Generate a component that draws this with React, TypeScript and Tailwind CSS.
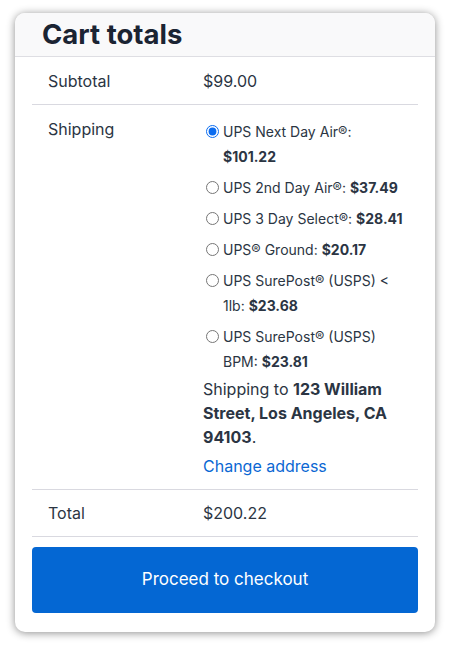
import { useState } from 'react';

const rates = [
  { id: 'next', label: 'UPS Next Day Air®:', price: '$101.22' },
  { id: '2nd', label: 'UPS 2nd Day Air®:', price: '$37.49' },
  { id: '3day', label: 'UPS 3 Day Select®:', price: '$28.41' },
  { id: 'ground', label: 'UPS® Ground:', price: '$20.17' },
  { id: 'sp1', label: 'UPS SurePost® (USPS) < 1lb:', price: '$23.68' },
  { id: 'sp2', label: 'UPS SurePost® (USPS) BPM:', price: '$23.81' },
];

export default function App() {
  const [rate, setRate] = useState('next');

  return (
    <div className="min-h-[645px] bg-white pl-[15px] pt-[13px] font-['Inter',sans-serif] text-[#2b3543]">
      <div className="flex h-[619px] w-[420px] flex-col overflow-hidden rounded-[10px] bg-white shadow-[0_1px_8px_rgba(0,0,0,0.45)]">
        <div className="flex h-[44px] items-end border-b border-[#dedee3] bg-[#f9f9fa] px-[27px]">
          <h2 className="pb-[5px] text-[27.5px] font-bold leading-[34px] text-[#1b2433]">Cart totals</h2>
        </div>

        <div className="flex flex-1 flex-col px-[17px]">
          <div className="grid h-[48px] grid-cols-[155px_1fr] items-center border-b border-[#d9d9e0] text-[16px]">
            <span className="pl-4">Subtotal</span>
            <span className="pl-4">$99.00</span>
          </div>

          <div className="grid grid-cols-[155px_1fr] border-b border-[#d9d9e0] pb-[11px] pt-[12px] text-[16px] leading-[24px]">
            <span className="pl-4">Shipping</span>
            <div className="pl-4">
              <ul className="mt-[2px] flex flex-col gap-[6px]">
                {rates.map((r) => (
                  <li key={r.id} className="flex items-start text-[14px] leading-[25px]">
                    <input
                      type="radio"
                      name="rate"
                      checked={rate === r.id}
                      onChange={() => setRate(r.id)}
                      className="ml-[3px] mr-[4px] mt-[6px] h-[13px] w-[13px] shrink-0 accent-[#0b6cf0]"
                    />
                    <label className="w-[182px]" onClick={() => setRate(r.id)}>
                      {r.label} <strong className="font-bold">{r.price}</strong>
                    </label>
                  </li>
                ))}
              </ul>
              <p className="mt-[3px] w-[200px]">
                Shipping to <strong className="font-bold">123 William Street, Los Angeles, CA 94103</strong>.
              </p>
              <a href="#" className="mt-[5px] block text-[#0b67d3]">
                Change address
              </a>
            </div>
          </div>

          <div className="grid h-[47px] grid-cols-[155px_1fr] items-center border-b border-[#d9d9e0] text-[16px]">
            <span className="pl-4">Total</span>
            <span className="pl-4">$200.22</span>
          </div>

          <button className="mt-[10px] h-[66px] w-full rounded-[4px] bg-[#0467d3] text-[17px] text-white">
            Proceed to checkout
          </button>
        </div>
      </div>
    </div>
  );
}
